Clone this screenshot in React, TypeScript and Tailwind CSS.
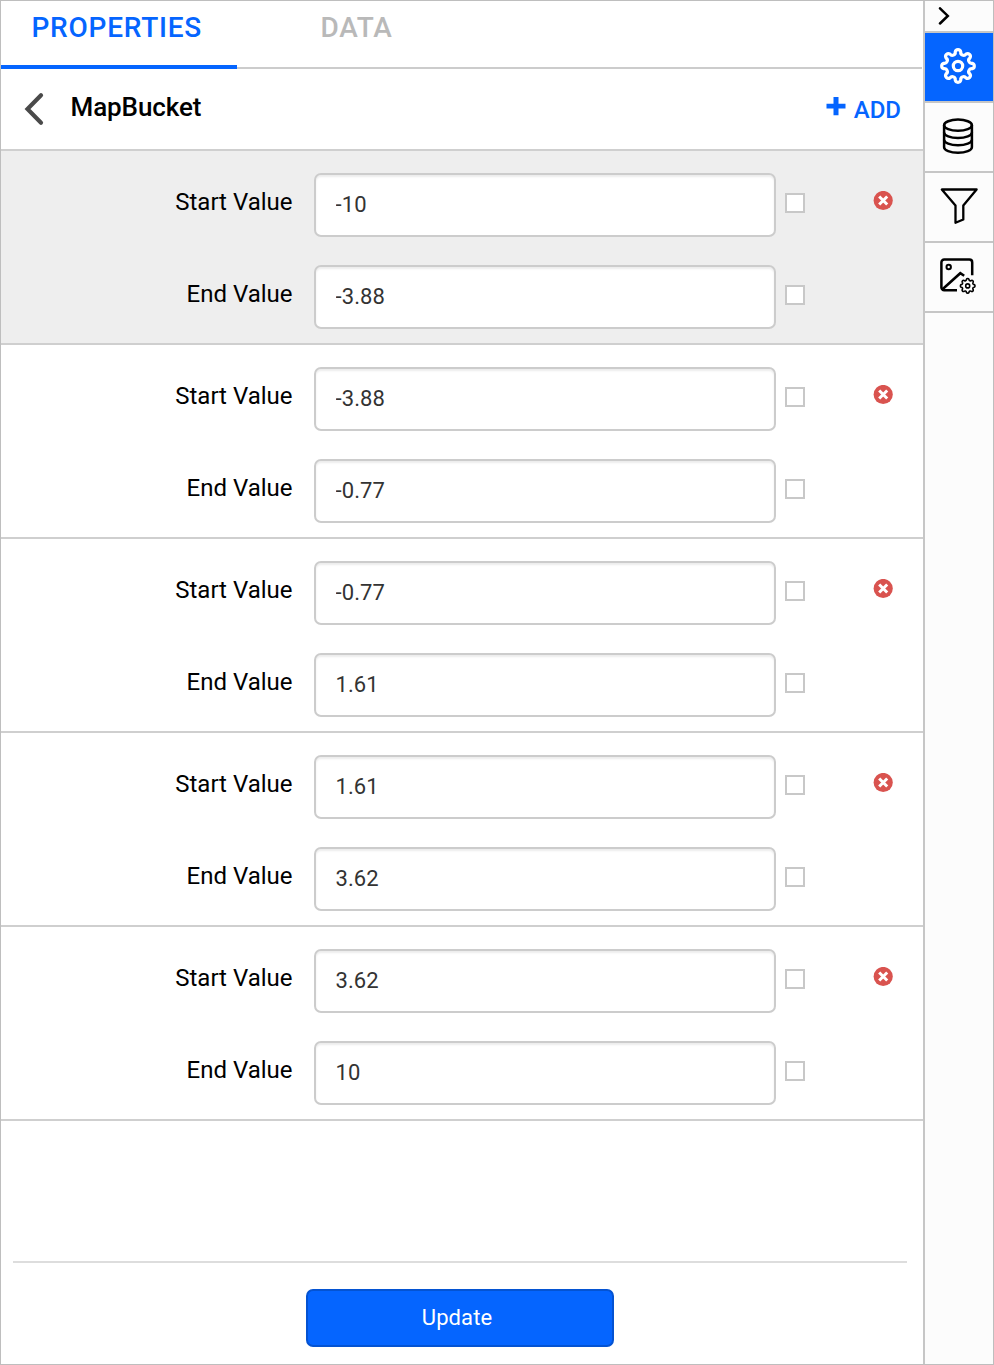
import { useState } from "react";
import type { ReactNode } from "react";

const buckets = [
  { start: "-10", end: "-3.88" },
  { start: "-3.88", end: "-0.77" },
  { start: "-0.77", end: "1.61" },
  { start: "1.61", end: "3.62" },
  { start: "3.62", end: "10" },
];

// Eight-lobed cog outline: alternating convex and concave arcs around a circle.
function cogPath(cx: number, cy: number, radius: number, arc: number) {
  let d = "";
  for (let i = 0; i <= 16; i++) {
    const a = ((i * 22.5 - 101.25) * Math.PI) / 180;
    const x = (cx + radius * Math.cos(a)).toFixed(2);
    const y = (cy + radius * Math.sin(a)).toFixed(2);
    d += i === 0 ? `M${x} ${y}` : `A${arc} ${arc} 0 0 ${i % 2} ${x} ${y}`;
  }
  return d + "Z";
}

function GearIcon() {
  return (
    <svg width="40" height="40" viewBox="0 0 40 40" fill="none" stroke="currentColor" strokeWidth="3.2" strokeLinejoin="round">
      <path d={cogPath(20, 20, 14.3, 2.85)} />
      <circle cx="20" cy="20" r="4.7" />
    </svg>
  );
}

function DatabaseIcon() {
  return (
    <svg width="40" height="40" viewBox="0 0 40 40" fill="none" stroke="currentColor" strokeWidth="2.5">
      <ellipse cx="20" cy="9.2" rx="13.9" ry="5.6" />
      <path d="M6.1 9v22.2c0 3.1 6.2 5.6 13.9 5.6s13.9-2.5 13.9-5.6V9" />
      <path d="M6.1 16.5c0 3.1 6.2 5.6 13.9 5.6s13.9-2.5 13.9-5.6M6.1 23.7c0 3.1 6.2 5.6 13.9 5.6s13.9-2.5 13.9-5.6" />
    </svg>
  );
}

function FilterIcon() {
  return (
    <svg width="40" height="40" viewBox="0 0 40 40" fill="none" stroke="currentColor" strokeWidth="2.3">
      <path d="M3.8 3.5h34.8L25.3 19.5v14l-7.8 3.3V19.5Z" strokeLinejoin="round" />
    </svg>
  );
}

function ImageSettingsIcon() {
  return (
    <svg width="40" height="40" viewBox="0 0 40 40" fill="none" stroke="currentColor" strokeWidth="2.5">
      <path d="M19 34.2H6.2A2.8 2.8 0 0 1 3.4 31.4V6.4A2.8 2.8 0 0 1 6.2 3.6h25.2A2.8 2.8 0 0 1 34.2 6.4v12.8" />
      <path d="M4.5 33.3 22.3 17.2l3.9 2.6" />
      <circle cx="10.7" cy="11" r="2.2" strokeWidth="2" />
      <path d={cogPath(29.7, 29.9, 6.6, 1.4)} strokeWidth="1.6" />
      <circle cx="29.7" cy="29.9" r="2" strokeWidth="1.6" />
    </svg>
  );
}

function SideButton({ label, active, children }: { label: string; active?: boolean; children: ReactNode }) {
  return (
    <button
      aria-label={label}
      className={`flex h-[70px] w-full items-center justify-center border-b-2 border-[#c6c6c6] pr-0.5 pb-0.5 ${active ? "bg-[#0565ff] text-white" : "text-black"}`}
    >
      {children}
    </button>
  );
}

function Field({ label, value, removable }: { label: string; value: string; removable?: boolean }) {
  return (
    <div className="flex h-16">
      <label className="w-[291.5px] pt-[15px] text-right text-[24px] leading-[28px] text-black">{label}</label>
      <input
        aria-label={label}
        defaultValue={value}
        className="ml-[21.5px] h-16 w-[462px] rounded-[7px] border-2 border-[#cccccc] bg-white pr-[19px] pb-0.5 pl-[19.5px] text-[22px] tracking-[0.1px] text-[#333333] shadow-[inset_0_2px_2px_rgba(0,0,0,0.075)] outline-none"
      />
      <input type="checkbox" aria-label={`${label} expression`} className="mt-5 ml-[9px] size-5 appearance-none border-2 border-[#c8c8c8] bg-white" />
      {removable && (
        <button aria-label="Remove" className="mt-[18px] ml-[68px] size-5">
          <svg width="20" height="20" viewBox="0 0 20 20">
            <circle cx="10.2" cy="9.5" r="9.6" fill="#d9534f" />
            <path d="m6.2 5.5 8 8m0-8-8 8" stroke="#fff" strokeWidth="3" />
          </svg>
        </button>
      )}
    </div>
  );
}

export default function App() {
  const [selected, setSelected] = useState(0);
  return (
    <div className="flex h-[1365px] w-[994px] border border-[#bebebe] bg-white font-['Roboto',sans-serif]">
      <main className="flex w-[922px] flex-col">
        <nav className="mr-px flex h-[68px] text-[28px] leading-[32px] font-medium">
          <button className="flex w-[236px] border-b-4 border-[#0565ff] pt-[11px] pl-[30.5px] tracking-[0.75px] text-[#0565ff]">PROPERTIES</button>
          <button className="flex flex-1 border-b-2 border-[#cccccc] pt-[11px] pl-[83.5px] tracking-[0.75px] text-[#b9b9b9]">DATA</button>
        </nav>
        <header className="flex h-[82px] border-b-2 border-[#cfcfcf]">
          <button aria-label="Back" className="mt-[23px] ml-[22px] h-8 w-[22px]">
            <svg width="22" height="34" viewBox="0 0 22 34" fill="none" stroke="#4a4a4a" strokeWidth="4.2" strokeLinecap="round">
              <path d="M18 3.3 4.5 17 18 30.7" strokeLinejoin="miter" />
            </svg>
          </button>
          <h1 className="mt-[22px] ml-[25.5px] text-[26px] leading-[32px] font-medium tracking-[-0.1px] text-black">MapBucket</h1>
          <button className="mt-[25px] mr-[22px] ml-auto flex h-8 text-[24px] leading-[32px] font-medium text-[#0565ff]">
            <svg width="20" height="20" viewBox="0 0 20 20" className="mt-[2px] mr-[7.5px]" fill="currentColor">
              <path d="M7.5 1h5v6.8h7v4.6h-7v6.9h-5v-6.9h-7V7.8h7Z" />
            </svg>
            ADD
          </button>
        </header>
        {buckets.map((b, i) => (
          <section
            key={i}
            onClick={() => setSelected(i)}
            className={`flex h-[194px] flex-col gap-7 border-b-2 border-[#cfcfcf] pt-[22px] ${i === selected ? "bg-[#eeeeee]" : "bg-white"}`}
          >
            <Field label="Start Value" value={b.start} removable />
            <Field label="End Value" value={b.end} />
          </section>
        ))}
        <footer className="mt-auto mr-4 mb-[17px] ml-3 flex border-t-2 border-[#dddddd] pt-[26px]">
          <button className="ml-[293px] h-[58px] w-[308px] rounded-[7px] border-2 border-[#0453d2] bg-[#0565ff] pr-1.5 pb-0.5 text-[22px] tracking-[0.1px] text-white">
            Update
          </button>
        </footer>
      </main>
      <aside className="flex w-[70px] flex-col border-l-2 border-[#c6c6c6] bg-[#fcfcfc]">
        <button aria-label="Collapse" className="flex h-8 w-full border-b-2 border-[#c6c6c6] pt-1.5 pl-[13px]">
          <svg width="12" height="18" viewBox="0 0 12 18" fill="none" stroke="#000" strokeWidth="2.5" strokeLinecap="round">
            <path d="m2 1.3 7.8 7.6L2 16.5" />
          </svg>
        </button>
        <SideButton label="Properties" active><GearIcon /></SideButton>
        <SideButton label="Data"><DatabaseIcon /></SideButton>
        <SideButton label="Filter"><FilterIcon /></SideButton>
        <SideButton label="Image settings"><ImageSettingsIcon /></SideButton>
      </aside>
    </div>
  );
}
